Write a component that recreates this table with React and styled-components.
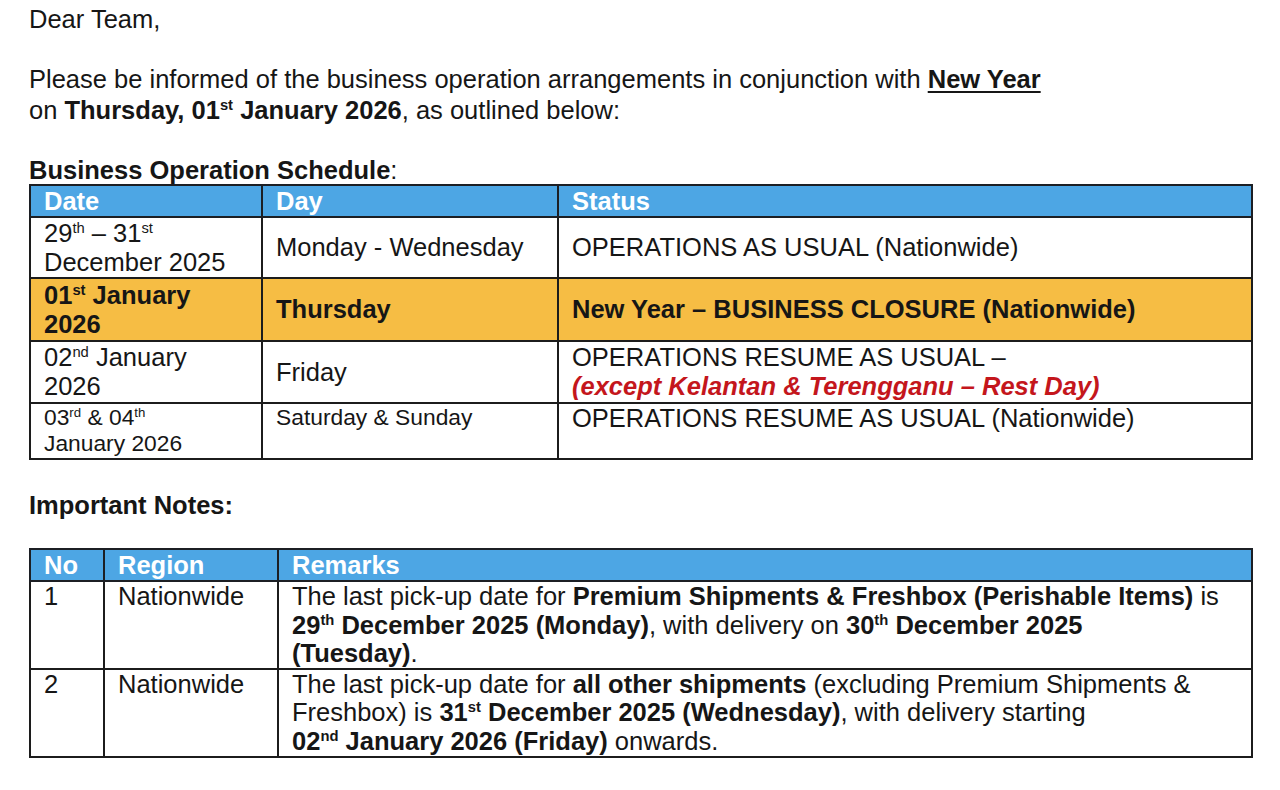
import React from "react";
import styled, { createGlobalStyle } from "styled-components";

const Global = createGlobalStyle`
  html, body { margin: 0; padding: 0; background: #ffffff; }
  body {
    font-family: "Liberation Sans", Arial, sans-serif;
    color: #161616;
    font-size: 25.5px;
  }
`;

const Page = styled.div`
  width: 1280px;
  min-height: 790px;
  box-sizing: border-box;
  padding: 4px 29px 0 29px;
  display: flex;
  flex-direction: column;
  align-items: flex-start;
`;

const Para = styled.p`
  margin: ${(p) => p.$top || 0}px 0 0 0;
  font-size: 25.5px;
  line-height: 31px;
`;

const Heading = styled.div`
  margin-top: ${(p) => p.$top || 0}px;
  font-size: 25.5px;
  line-height: 27px;
  font-weight: 700;
`;

const Light = styled.span`
  font-weight: 400;
`;

const B = styled.b`
  font-weight: 700;
`;

const U = styled.span`
  font-weight: 700;
  text-decoration: underline;
  text-decoration-thickness: 2px;
  text-underline-offset: 3px;
`;

const Sup = styled.sup`
  font-size: 0.58em;
  line-height: 0;
  vertical-align: 0.62em;
`;

const Red = styled.span`
  color: #c4161c;
  font-weight: 700;
  font-style: italic;
`;

const Table = styled.table`
  border-collapse: collapse;
  table-layout: fixed;
  width: 1222px;
  margin-top: ${(p) => p.$top || 0}px;
`;

const Col = styled.col`
  width: ${(p) => p.$w}px;
`;

const HeadRow = styled.tr`
  height: 32px;
  background: #4da6e4;
`;

const Th = styled.th`
  border: 2px solid #1c1f24;
  padding: 0 10px 0 13px;
  color: #ffffff;
  font-weight: 700;
  font-size: 25.5px;
  line-height: 28px;
  text-align: left;
  vertical-align: middle;
`;

const Row = styled.tr`
  height: ${(p) => p.$h}px;
  background: ${(p) => (p.$highlight ? "#f6bd44" : "#ffffff")};
`;

const Td = styled.td`
  border: 2px solid #1c1c1c;
  padding: 0 8px 0 13px;
  font-size: ${(p) => (p.$small ? 22.8 : 25.5)}px;
  line-height: ${(p) => (p.$small ? 26 : p.$lh || 29)}px;
  font-weight: ${(p) => (p.$bold ? 700 : 400)};
  vertical-align: ${(p) => (p.$top ? "top" : "middle")};
  text-align: left;
`;

export default function App() {
  return (
    <>
      <Global />
      <Page>
        <Para>Dear Team,</Para>
        <Para $top={29}>
          Please be informed of the business operation arrangements in conjunction with{" "}
          <U>New Year</U>
          <br />
          on{" "}
          <B>
            Thursday, 01<Sup>st</Sup> January 2026
          </B>
          , as outlined below:
        </Para>

        <Heading $top={31}>
          Business Operation Schedule<Light>:</Light>
        </Heading>
        <Table>
          <colgroup>
            <Col $w={232} />
            <Col $w={296} />
            <Col $w={694} />
          </colgroup>
          <tbody>
            <HeadRow>
              <Th>Date</Th>
              <Th>Day</Th>
              <Th>Status</Th>
            </HeadRow>
            <Row $h={61}>
              <Td>
                29<Sup>th</Sup> – 31<Sup>st</Sup>
                <br />
                December 2025
              </Td>
              <Td>Monday - Wednesday</Td>
              <Td>OPERATIONS AS USUAL (Nationwide)</Td>
            </Row>
            <Row $h={63} $highlight>
              <Td $bold>
                01<Sup>st</Sup> January
                <br />
                2026
              </Td>
              <Td $bold>Thursday</Td>
              <Td $bold>New Year – BUSINESS CLOSURE (Nationwide)</Td>
            </Row>
            <Row $h={62}>
              <Td>
                02<Sup>nd</Sup> January
                <br />
                2026
              </Td>
              <Td>Friday</Td>
              <Td>
                OPERATIONS RESUME AS USUAL –
                <br />
                <Red>(except Kelantan &amp; Terengganu – Rest Day)</Red>
              </Td>
            </Row>
            <Row $h={56}>
              <Td $top $small>
                03<Sup>rd</Sup> &amp; 04<Sup>th</Sup>
                <br />
                January 2026
              </Td>
              <Td $top $small>
                Saturday &amp; Sunday
              </Td>
              <Td $top>OPERATIONS RESUME AS USUAL (Nationwide)</Td>
            </Row>
          </tbody>
        </Table>

        <Heading $top={32}>Important Notes:</Heading>
        <Table $top={29}>
          <colgroup>
            <Col $w={74} />
            <Col $w={174} />
            <Col $w={974} />
          </colgroup>
          <tbody>
            <HeadRow>
              <Th>No</Th>
              <Th>Region</Th>
              <Th>Remarks</Th>
            </HeadRow>
            <Row $h={87}>
              <Td $top>1</Td>
              <Td $top>Nationwide</Td>
              <Td $top $lh={28.5}>
                The last pick-up date for{" "}
                <B>Premium Shipments &amp; Freshbox (Perishable Items)</B> is
                <br />
                <B>
                  29<Sup>th</Sup> December 2025 (Monday)
                </B>
                , with delivery on{" "}
                <B>
                  30<Sup>th</Sup> December 2025
                </B>
                <br />
                <B>(Tuesday)</B>.
              </Td>
            </Row>
            <Row $h={88}>
              <Td $top>2</Td>
              <Td $top>Nationwide</Td>
              <Td $top $lh={28.5}>
                The last pick-up date for <B>all other shipments</B> (excluding Premium Shipments &amp;
                <br />
                Freshbox) is{" "}
                <B>
                  31<Sup>st</Sup> December 2025 (Wednesday)
                </B>
                , with delivery starting
                <br />
                <B>
                  02<Sup>nd</Sup> January 2026 (Friday)
                </B>{" "}
                onwards.
              </Td>
            </Row>
          </tbody>
        </Table>
      </Page>
    </>
  );
}
